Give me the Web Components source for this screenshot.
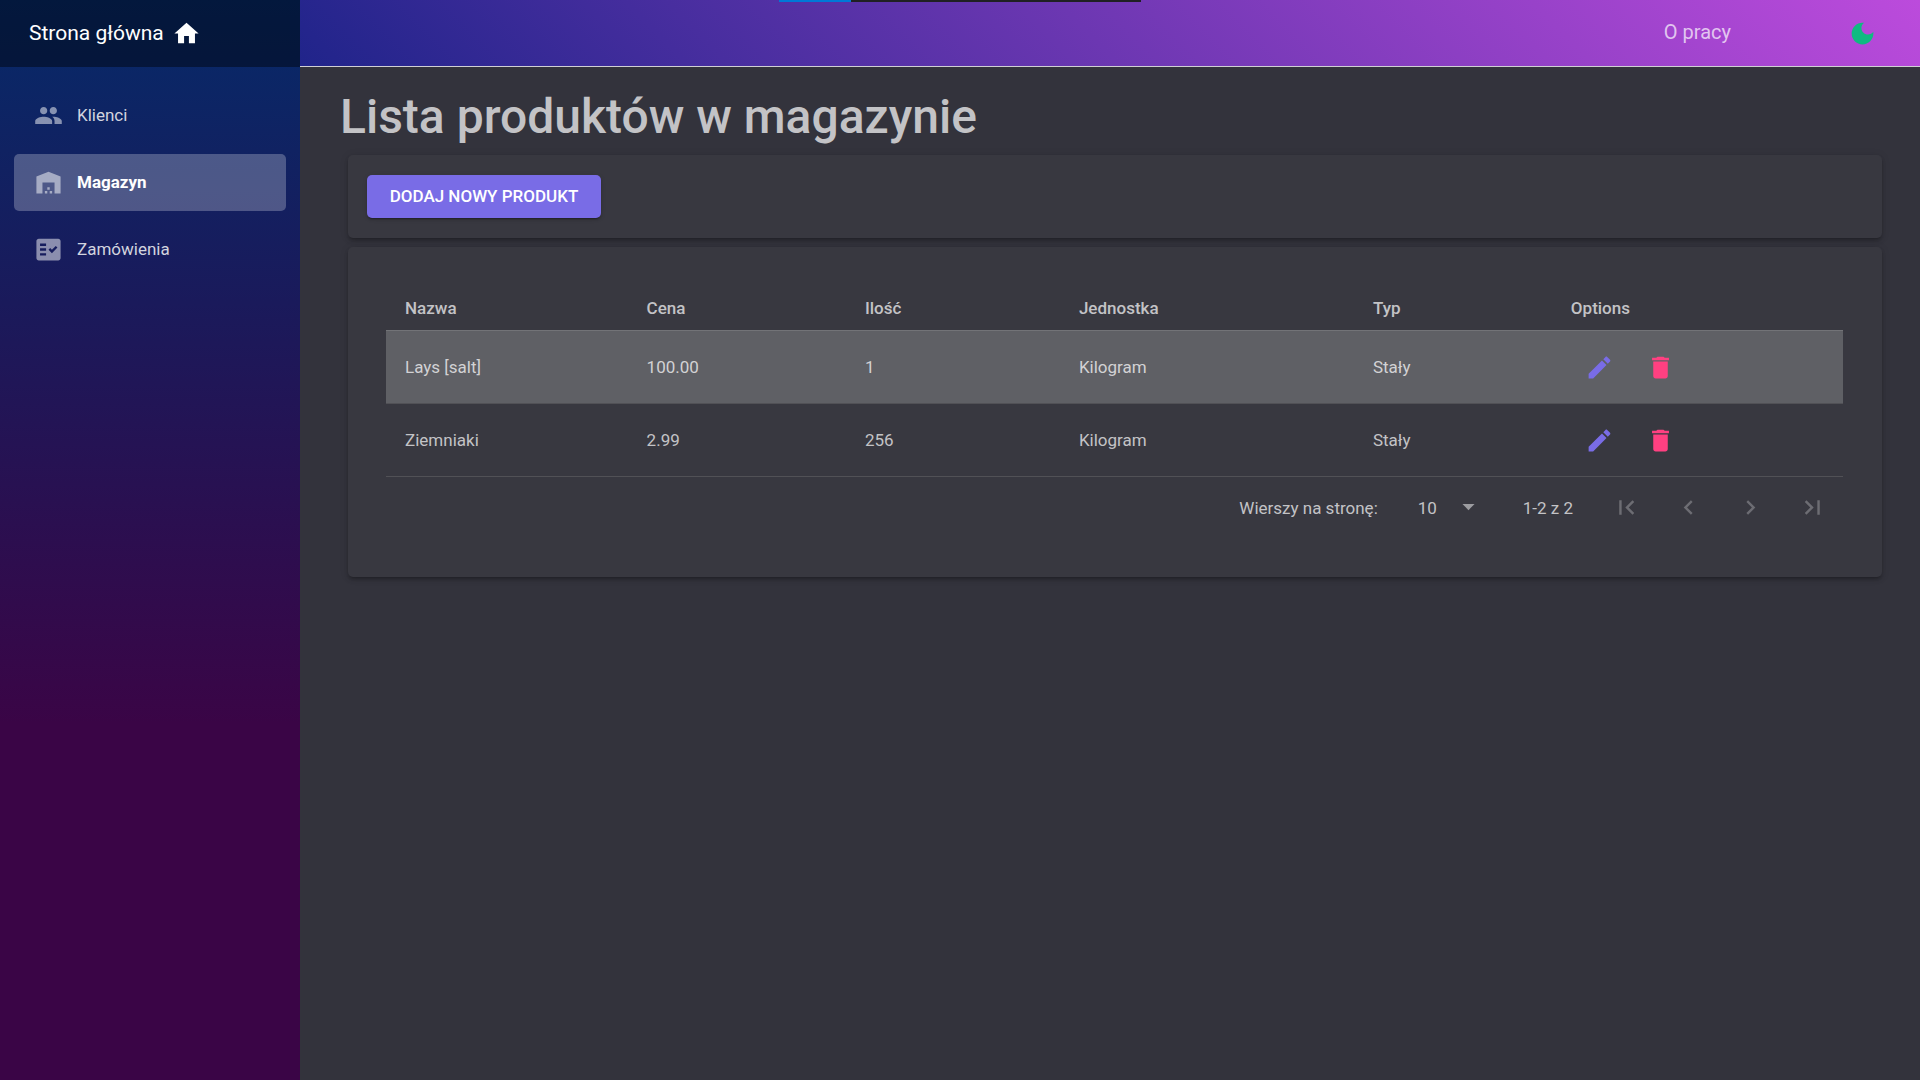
<!DOCTYPE html>
<html lang="pl">
<head>
<meta charset="utf-8">
<title>Lista produktów w magazynie</title>
<style>
  html, body { margin: 0; min-height: 100%; }
  body { font-family: Roboto, "Liberation Sans", sans-serif; font-size: 17px; line-height: 24px; color: #c3c3c6; background: #33333c; }
</style>
</head>
<body>
<app-shell>
  <side-nav slot="side" home="Strona główna">
    <nav-item icon="people">Klienci</nav-item>
    <nav-item icon="warehouse" active>Magazyn</nav-item>
    <nav-item icon="orders">Zamówienia</nav-item>
  </side-nav>
  <top-bar slot="top">O pracy</top-bar>
  <page-title>Lista produktów w magazynie</page-title>
  <ui-card><main-button>DODAJ NOWY PRODUKT</main-button></ui-card>
  <ui-card wide>
    <product-table></product-table>
    <table-pager></table-pager>
  </ui-card>
</app-shell>
<window-grip></window-grip>

<script>
const ICONS = {
  home: 'M10 20v-6h4v6h5v-8h3L12 3 2 12h3v8z',
  people: 'M16 11c1.66 0 2.99-1.34 2.99-3S17.66 5 16 5c-1.66 0-3 1.34-3 3s1.34 3 3 3zm-8 0c1.66 0 2.99-1.34 2.99-3S9.66 5 8 5C6.34 5 5 6.34 5 8s1.34 3 3 3zm0 2c-2.33 0-7 1.17-7 3.5V19h14v-2.5c0-2.33-4.67-3.5-7-3.5zm8 0c-.29 0-.62.02-.97.05 1.16.84 1.97 1.97 1.97 3.45V19h6v-2.5c0-2.33-4.67-3.5-7-3.5z',
  warehouse: 'M22 21V7L12 3 2 7v14h5v-9h10v9h5zm-11-2H9v2h2v-2zm2-3h-2v2h2v-2zm2 3h-2v2h2v-2z',
  orders: 'M20 3H4c-1.1 0-2 .9-2 2v14c0 1.1.9 2 2 2h16c1.1 0 2-.9 2-2V5c0-1.1-.9-2-2-2zM10 17H5v-2h5v2zm0-4H5v-2h5v2zm0-4H5V7h5v2zm4.82 6L12 12.16l1.41-1.41 1.41 1.42L17.99 9l1.42 1.42L14.82 15z',
  moon: 'M12 3c-4.97 0-9 4.03-9 9s4.03 9 9 9 9-4.03 9-9c0-.46-.04-.92-.1-1.36-.98 1.37-2.58 2.26-4.4 2.26-2.98 0-5.4-2.42-5.4-5.4 0-1.81.89-3.42 2.26-4.4-.44-.06-.9-.1-1.36-.1z',
  edit: 'M3 17.25V21h3.75L17.81 9.94l-3.75-3.75L3 17.25zM20.71 7.04c.39-.39.39-1.02 0-1.41l-2.34-2.34c-.39-.39-1.02-.39-1.41 0l-1.83 1.83 3.75 3.75 1.83-1.83z',
  trash: 'M6 19c0 1.1.9 2 2 2h8c1.1 0 2-.9 2-2V7H6v12zM19 4h-3.5l-1-1h-5l-1 1H5v2h14V4z',
  drop: 'M7 10l5 5 5-5z',
  first: 'M18.41 16.59L13.82 12l4.59-4.59L17 6l-6 6 6 6zM6 6h2v12H6z',
  prev: 'M15.41 7.41L14 6l-6 6 6 6 1.41-1.41L10.83 12z',
  next: 'M10 6L8.59 7.41 13.17 12l-4.58 4.59L10 18l6-6z',
  last: 'M5.59 7.41L10.18 12l-4.59 4.59L7 18l6-6-6-6zM16 6h2v12h-2z'
};

function define(name, css, html) {
  customElements.define(name, class extends HTMLElement {
    connectedCallback() {
      if (this.shadowRoot) return;
      const root = this.attachShadow({ mode: 'open' });
      root.innerHTML = `<style>*{box-sizing:border-box}${css}</style>` + (typeof html === 'function' ? html(this) : html);
    }
  });
}

define('app-icon',
  `:host{display:block;width:29px;height:29px;flex:none}
   svg{display:block;width:100%;height:100%;fill:currentColor}`,
  el => `<svg viewBox="0 0 24 24" aria-hidden="true"><path d="${ICONS[el.getAttribute('name')]}"/></svg>`);

define('app-shell',
  `:host{display:grid;grid-template-columns:300px minmax(0,1fr);grid-template-rows:auto 1fr;min-height:100vh}
   slot[name=side]::slotted(*){grid-row:1 / 3}
   main{padding:20px 38px;display:flex;flex-direction:column}`,
  `<slot name="side"></slot><slot name="top"></slot><main><slot></slot></main>`);

define('side-nav',
  `:host{display:flex;flex-direction:column;background:linear-gradient(180deg,#062a69 0,#1a1a5b 28%,#3a0546 67%)}
   .home{display:flex;align-items:center;gap:8px;height:67px;padding:0 29px;background:rgba(0,0,0,.42);color:#fff;font-size:21px;text-decoration:none}
   .home span{padding-bottom:2px}
   nav{display:flex;flex-direction:column;gap:10px;padding:20px 14px}`,
  el => `<a class="home" href="#home"><span>${el.getAttribute('home')}</span><app-icon name="home"></app-icon></a><nav><slot></slot></nav>`);

define('nav-item',
  `:host{display:block}
   a{display:flex;align-items:center;gap:14px;height:57px;padding:0 20px;border-radius:5px;color:#d2d4df;text-decoration:none}
   span{padding-bottom:2px}
   app-icon{color:rgba(255,255,255,.5)}
   :host([active]) a{background:rgba(255,255,255,.25);color:#fff;font-weight:700}`,
  el => `<a href="#${el.getAttribute('icon')}"><app-icon name="${el.getAttribute('icon')}"></app-icon><span><slot></slot></span></a>`);

define('top-bar',
  `:host{display:block}
   header{display:flex;align-items:center;justify-content:flex-end;gap:102px;height:67px;padding:0 29px;border-bottom:1px solid #d0d0d4;background:linear-gradient(45deg,#20248a,#bc4bdc)}
   a{padding-bottom:2px;color:rgba(255,255,255,.7);font-size:20px;text-decoration:none}
   button{display:grid;place-items:center;width:58px;height:58px;padding:0;border:0;background:none;color:#0fba81}`,
  `<header><a href="#about"><slot></slot></a><button type="button" aria-label="Tryb ciemny"><app-icon name="moon"></app-icon></button></header>`);

define('page-title',
  `:host{display:block;margin-bottom:10px}
   h1{margin:0;padding:2px 2px 0;font-size:48px;line-height:56px;font-weight:500}`,
  `<h1><slot></slot></h1>`);

define('ui-card',
  `:host{display:block;margin:0 0 9px 10px;padding:20px 19px;border-radius:5px;background:#383840;box-shadow:0 3px 3px -2px rgba(0,0,0,.2),0 3px 4px rgba(0,0,0,.14),0 1px 8px rgba(0,0,0,.12)}
   :host([wide]){padding:39px 39px 38px 38px}`,
  `<slot></slot>`);

define('main-button',
  `:host{display:flex}
   button{min-width:234px;height:43px;padding:0 19px 2px;border:0;border-radius:5px;background:#796ce6;color:#fff;font:500 17px/24px Roboto,"Liberation Sans",sans-serif;box-shadow:0 3px 1px -2px rgba(0,0,0,.2),0 2px 2px rgba(0,0,0,.14),0 1px 5px rgba(0,0,0,.12)}`,
  `<button type="button"><slot></slot></button>`);

const HEADS = ['Nazwa', 'Cena', 'Ilość', 'Jednostka', 'Typ', 'Options'];
const WIDTHS = [242, 218, 214, 294, 198, 291];
const ROWS = [['Lays [salt]', '100.00', '1', 'Kilogram', 'Stały'], ['Ziemniaki', '2.99', '256', 'Kilogram', 'Stały']];
define('product-table',
  `:host{display:block}
   table{width:100%;table-layout:fixed;border-collapse:separate;border-spacing:0}
   th,td{padding:0 19px;border-bottom:1px solid #515156;text-align:left}
   th{height:45px;font-weight:500;border-color:#727377}
   td{height:73px}
   tbody tr:first-child{background:#5f6065}
   tbody tr:first-child td{color:#d2d2d4}
   .actions{display:flex;gap:3px}
   button{display:grid;place-items:center;width:58px;height:58px;padding:0;border:0;background:none;color:#796ce6}
   .del{color:#ff4081}`,
  () => `<table><colgroup>${WIDTHS.map(w => `<col style="width:${Math.round(w / 1457 * 1000) / 10}%">`).join('')}</colgroup>
   <thead><tr>${HEADS.map(h => `<th scope="col">${h}</th>`).join('')}</tr></thead>
   <tbody>${ROWS.map(r => `<tr>${r.map(c => `<td>${c}</td>`).join('')}<td><div class="actions">
     <button type="button" aria-label="Edytuj"><app-icon name="edit"></app-icon></button>
     <button type="button" class="del" aria-label="Usuń"><app-icon name="trash"></app-icon></button></div></td></tr>`).join('')}</tbody></table>`);

define('table-pager',
  `:host{display:flex;align-items:center;justify-content:flex-end;height:62px;padding-right:2px}
   .size{display:grid;align-items:center;margin:0 40px 0 31px;width:74px}
   select,.size app-icon{grid-area:1 / 1}
   select{appearance:none;width:100%;height:29px;padding:0 0 0 9px;border:0;background:none;color:inherit;font:inherit}
   .size app-icon{justify-self:end;margin-bottom:4px;color:#9c9ca0;pointer-events:none}
   .steps{display:flex;gap:4px;margin-left:24px;padding-bottom:2px}
   button{display:grid;place-items:center;width:58px;height:58px;padding:0;border:0;background:none;color:#6d6d73}`,
  `<label for="size">Wierszy na stronę:</label>
   <div class="size"><select id="size"><option>10</option></select><app-icon name="drop"></app-icon></div>
   <span>1-2 z 2</span>
   <div class="steps">
     <button type="button" disabled aria-label="Pierwsza"><app-icon name="first"></app-icon></button>
     <button type="button" disabled aria-label="Poprzednia"><app-icon name="prev"></app-icon></button>
     <button type="button" disabled aria-label="Następna"><app-icon name="next"></app-icon></button>
     <button type="button" disabled aria-label="Ostatnia"><app-icon name="last"></app-icon></button>
   </div>`);

/* Slim progress strip centred over the top edge of the window. */
define('window-grip',
  `:host{position:absolute;top:0;left:0;right:0;margin:0 auto;width:362px;height:2px;background:linear-gradient(90deg,#0078d7 72px,#202024 72px)}`,
  ``);
</script>
</body>
</html>
